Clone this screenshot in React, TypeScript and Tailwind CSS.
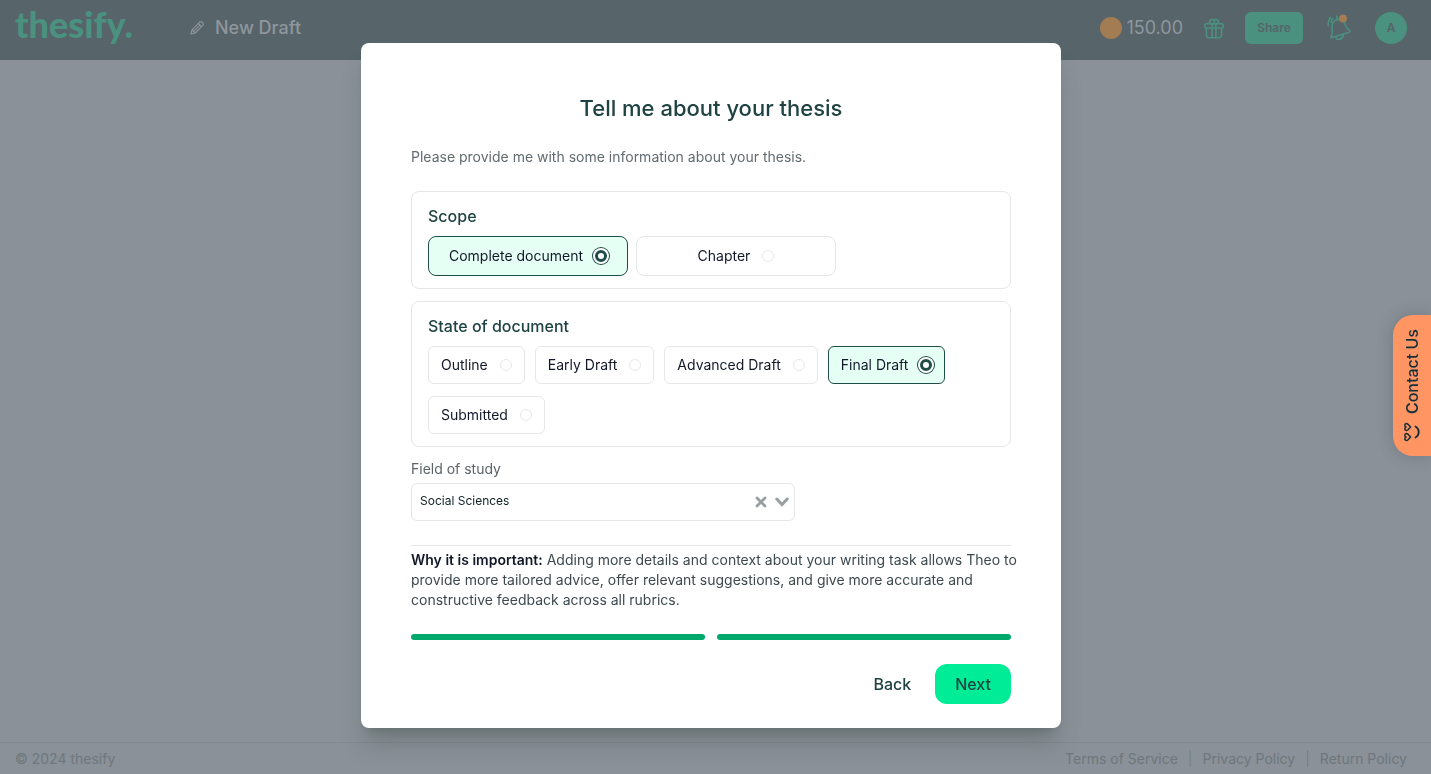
import React, { useState } from 'react';

const Coin = () => <span className="size-[22px] rounded-full bg-[#a47c54]" />;

const PencilIcon = () => (
  <svg className="size-4" viewBox="0 0 16 16" fill="none" stroke="currentColor" strokeWidth="1.1" strokeLinejoin="round">
    <path d="M2 14l1-4.2 7.6-7.6a1.8 1.8 0 0 1 2.6 0l.6.6a1.8 1.8 0 0 1 0 2.6L6.2 13z" />
    <path d="M9.3 3.5l3.2 3.2M3 9.8l3.2 3.2M4.6 11.4l6.3-6.3" />
  </svg>
);

const GiftIcon = () => (
  <svg className="size-[22px]" viewBox="0 0 22 22" fill="none" stroke="currentColor" strokeWidth="1.6" strokeLinejoin="round">
    <rect x="1.8" y="6.8" width="18.4" height="4.2" rx="1.4" />
    <path d="M3.4 11v7.2a2.6 2.6 0 0 0 2.6 2.6h10a2.6 2.6 0 0 0 2.6-2.6V11M9.1 6.8v14M12.9 6.8v14" />
    <path d="M11 6.8H8.6A2.2 2.2 0 1 1 11 4.2zM11 6.8h2.4A2.2 2.2 0 1 0 11 4.2z" />
  </svg>
);

const BellIcon = () => (
  <svg className="h-7 w-6" viewBox="0 0 24 28" fill="none" stroke="currentColor" strokeWidth="1.6" strokeLinecap="round" strokeLinejoin="round">
    <path d="M4 22.4c1.4-1.6 1.6-3.2 1.2-5.9-.9-6 .8-9.8 4.8-10.7 4.2-.9 7.2 1.5 8.5 5.5.9 2.8 1.9 4 4 5.1.7.5.6 1.6-.3 1.9L5 23.6c-1 .2-1.5-.5-1-1.2z" />
    <path d="M8.6 23c1.3 4 6.8 3 7.8-2M10.3 5.6L9.7 2M1.2 11.5c-.3-3 .4-5.800 2-8M4.300 8.500c0-1.600.4-3 1.200-4.200" />
    <circle cx="16" cy="4.5" r="4" fill="#a47c54" stroke="none" />
  </svg>
);

const LoveFaceIcon = () => (
  <svg className="size-5 rotate-90" viewBox="0 0 20 20" fill="none" stroke="currentColor" strokeWidth="1.5" strokeLinecap="round" strokeLinejoin="round">
    <path d="M5 8.600L2.300 6C.9 4.500 1.700 2.800 3.200 2.800c.9 0 1.500.5 1.800 1.300.3-.8.9-1.300 1.800-1.300 1.500 0 2.300 1.700.9 3.200z" />
    <path d="M15 8.600L12.300 6c-1.400-1.500-.6-3.200.9-3.200.9 0 1.500.5 1.800 1.300.3-.8.9-1.300 1.800-1.300 1.500 0 2.300 1.700.9 3.200z" />
    <path d="M4.5 13.500c2.500 4.300 8.500 4.300 11 0" strokeWidth="1.8" />
  </svg>
);

const Header = () => (
  <header className="flex h-[60px] items-start justify-between bg-[#576469] pl-[15px] pr-6 text-[#8f969e]">
    <div className="flex h-14 items-center">
      <a href="#" className="w-[174px] self-start font-[Lato,sans-serif] text-4xl leading-[48px] font-black text-[#4a917f]">
        thesify.
      </a>
      <PencilIcon />
      <span className="ml-2.5 text-lg font-medium">New Draft</span>
    </div>
    <div className="flex h-14 items-center text-[#4a917f]">
      <Coin />
      <span className="ml-1 text-lg text-[#8f969e]">150.00</span>
      <button type="button" aria-label="Gifts" className="ml-5">
        <GiftIcon />
      </button>
      <button type="button" className="ml-5 h-8 w-[58px] rounded-md bg-[#4a917f] text-xs font-semibold text-[#576469]">
        Share
      </button>
      <button type="button" aria-label="Notifications" className="ml-6">
        <BellIcon />
      </button>
      <button type="button" className="ml-6 size-8 rounded-full bg-[#4a917f] text-xs font-semibold text-[#576469]">
        A
      </button>
    </div>
  </header>
);

const Footer = () => (
  <footer className="flex h-8 items-center justify-between border-t border-[#82898f] pl-[15px] pr-6 text-sm text-[#6e777c]">
    <span>© 2024 thesify</span>
    <nav className="flex items-center gap-2.5">
      <a href="#">Terms of Service</a>
      <span className="text-[#777f85]">|</span>
      <a href="#">Privacy Policy</a>
      <span className="text-[#777f85]">|</span>
      <a href="#">Return Policy</a>
    </nav>
  </footer>
);

type OptionProps = {
  name: string;
  label: string;
  checked: boolean;
  onSelect: (label: string) => void;
  className: string;
};

const Option = ({ name, label, checked, onSelect, className }: OptionProps) => (
  <label
    className={`flex cursor-pointer items-center gap-3 border text-sm text-[#111827] ${
      checked ? 'border-[#1f4d48] bg-[#e6fff5]' : 'border-gray-200 bg-white'
    } ${className}`}
  >
    {label}
    <input
      type="radio"
      name={name}
      checked={checked}
      onChange={() => onSelect(label)}
      className="size-3 appearance-none rounded-full border border-gray-200 bg-white checked:border-[3px] checked:border-[#1f4d48] checked:shadow-[0_0_0_2px_#fff,0_0_0_3px_#1f4d48]"
    />
  </label>
);

const scopes = ['Complete document', 'Chapter'];
const states = ['Outline', 'Early Draft', 'Advanced Draft', 'Final Draft', 'Submitted'];

const ThesisDialog = () => {
  const [scope, setScope] = useState('Complete document');
  const [state, setState] = useState('Final Draft');
  const [field, setField] = useState('Social Sciences');

  return (
    <div
      role="dialog"
      aria-labelledby="dialog-title"
      className="w-full max-w-[700px] rounded-lg bg-white px-[50px] pt-[49px] pb-6 shadow-[0_20px_25px_-5px_rgba(60,75,70,0.3),0_8px_10px_-6px_rgba(60,75,70,0.3)]"
    >
      <h1 id="dialog-title" className="mb-[23px] text-center text-[22px] leading-8 font-medium text-[#1f4243]">
        Tell me about your thesis
      </h1>
      <p className="mb-6 text-sm text-[#626b70]">Please provide me with some information about your thesis.</p>

      {/* Scope */}
      <fieldset className="mb-3 rounded-lg border border-gray-200 px-4 py-3">
        <legend className="float-left mb-2 w-full text-base font-medium text-[#1f4243]">Scope</legend>
        <div className="clear-both flex flex-wrap gap-2">
          {scopes.map((s) => (
            <Option
              key={s}
              name="scope"
              label={s}
              checked={scope === s}
              onSelect={setScope}
              className="h-10 w-[200px] justify-center rounded-lg"
            />
          ))}
        </div>
      </fieldset>

      {/* State of document */}
      <fieldset className="mb-3 rounded-lg border border-gray-200 px-4 py-3">
        <legend className="float-left mb-2 w-full text-base font-medium text-[#1f4243]">State of document</legend>
        <div className="clear-both flex flex-wrap gap-x-2.5 gap-y-3">
          {states.map((s) => (
            <Option
              key={s}
              name="state"
              label={s}
              checked={state === s}
              onSelect={setState}
              className="h-[38px] rounded-md px-3"
            />
          ))}
        </div>
      </fieldset>

      {/* Field of study */}
      <label htmlFor="field" className="mb-1 block text-sm text-[#5a6469]">
        Field of study
      </label>
      <div className="relative mb-6 w-full max-w-96">
        <select
          id="field"
          value={field}
          onChange={(e) => setField(e.target.value)}
          className="block h-[38px] w-full appearance-none rounded-md border border-gray-200 bg-white px-2 pb-0.5 text-xs text-[#0f1f24] outline-none"
        >
          <option value=""></option>
          <option>Social Sciences</option>
          <option>Natural Sciences</option>
          <option>Humanities</option>
        </select>
        <div className="pointer-events-none absolute inset-y-0 right-1.5 flex items-center gap-2 text-[#999fa1]">
          <button type="button" aria-label="Clear" className="pointer-events-auto" onClick={() => setField('')}>
            <svg className="size-3" viewBox="0 0 12 12" stroke="currentColor" strokeWidth="2.8" strokeLinecap="round">
              <path d="M2 2l8 8M10 2l-8 8" />
            </svg>
          </button>
          <svg className="h-3 w-3.5" viewBox="0 0 14 12" fill="none" stroke="currentColor" strokeWidth="3" strokeLinecap="round">
            <path d="M1.8 3L7 8.5 12.2 3" />
          </svg>
        </div>
      </div>

      <div className="mb-6 border-t border-gray-200 pt-1">
        <p className="-mr-4 text-sm text-[#3d494e]">
          <strong className="font-semibold text-[#111827]">Why it is important:</strong> Adding more details and context
          about your writing task allows Theo to provide more tailored advice, offer relevant suggestions, and give more
          accurate and constructive feedback across all rubrics.
        </p>
      </div>

      {/* Progress */}
      <div className="mb-6 flex gap-3">
        <span className="h-1.5 flex-1 rounded-full bg-[#00a96b]" />
        <span className="h-1.5 flex-1 rounded-full bg-[#00a96b]" />
      </div>

      <div className="flex items-center justify-end gap-6 font-medium text-[#1f4243]">
        <button type="button">Back</button>
        <button type="button" className="h-10 rounded-xl bg-[#00ec97] px-5">
          Next
        </button>
      </div>
    </div>
  );
};

// Paddings are logical, so px runs along the vertical text here
const ContactTab = () => (
  <button
    type="button"
    className="fixed top-[315px] right-0 flex rotate-180 items-center gap-2 rounded-r-[20px] bg-[#ff9563] px-3.5 py-[7px] text-base font-medium text-[#12303a] shadow-[0_0_16px_rgba(60,70,80,0.3)] [writing-mode:vertical-rl]"
  >
    <LoveFaceIcon />
    Contact Us
  </button>
);

const App = () => (
  <div className="flex min-h-screen flex-col bg-[#8a9198] font-[Inter,sans-serif]">
    <Header />
    <main className="flex-1" />
    <Footer />
    <div className="fixed inset-0 flex items-start justify-center overflow-auto pt-[43px] pr-[9px]">
      <ThesisDialog />
    </div>
    <ContactTab />
  </div>
);

export default App;
